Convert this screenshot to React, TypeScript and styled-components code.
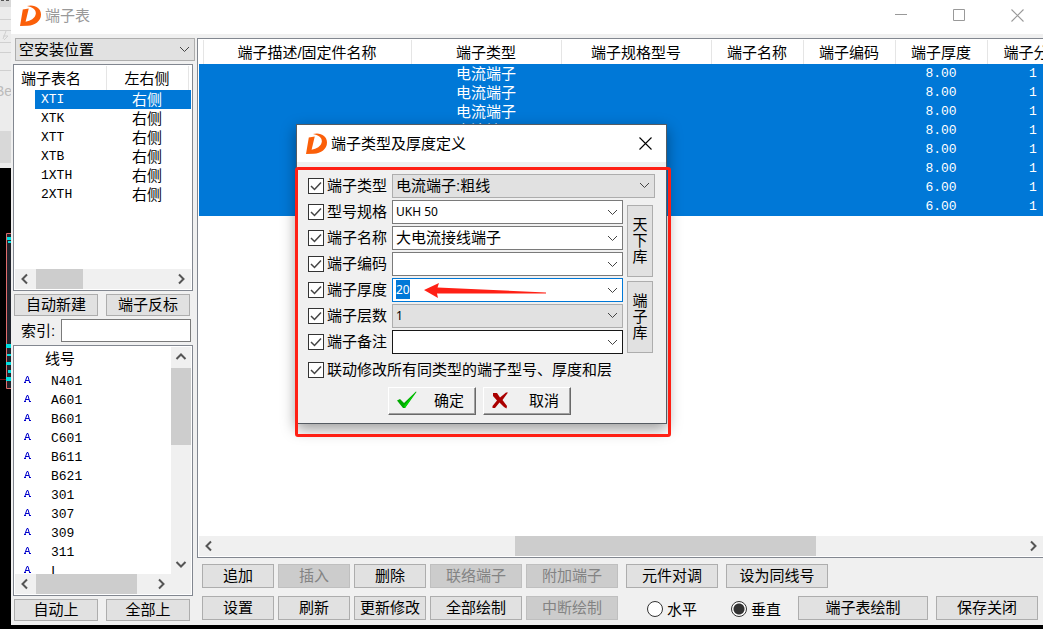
import React, { useEffect, useRef } from 'react';
import styled, { createGlobalStyle, css } from 'styled-components';

const song = '"Liberation Sans", "Noto Sans CJK SC", sans-serif';
const mono = '"Liberation Mono", "Noto Sans CJK SC", monospace';
const hei = '"Noto Sans", "Noto Sans CJK SC", sans-serif';

const GlobalStyle = createGlobalStyle`
  * { box-sizing: border-box; }
  html, body { margin: 0; overflow: hidden; }
  body { font: 400 15px/19px ${song}; color: #000; background: #000; }
  button, input, select { font: inherit; color: inherit; margin: 0; border-radius: 0; }
`;

const Desktop = styled.div`
  display: flex;
  height: 100vh;
  min-height: 600px;
  background: #000;
`;

const Backdrop = styled.svg`
  flex: none;
  width: 11px;
  height: 100%;
`;

const AppWindow = styled.main`
  position: relative;
  flex: 1;
  min-width: 0;
  margin-bottom: 4px;
  display: flex;
  flex-direction: column;
  background: #f0f0f0;
`;

const TitleBar = styled.header<{ $inactive?: boolean }>`
  display: flex;
  align-items: center;
  flex: none;
  background: #fff;
  ${(p) =>
    p.$inactive
      ? css`
          height: 34px;
          padding: 0 19px 4px 9px;
          color: #999;
        `
      : css`
          height: 37px;
          padding: 0 14px 0 9px;
          color: #000;
        `}
`;

const Title = styled.h1`
  flex: 1;
  margin: 0 0 0 4px;
  font-size: 15px;
  font-weight: 400;
`;

const CaptionButtons = styled.div`
  display: flex;
  gap: 45px;
`;

const CaptionButton = styled.button`
  display: flex;
  width: 13px;
  height: 13px;
  padding: 0;
  border: 0;
  background: none;
`;

const WindowBody = styled.div`
  flex: 1;
  min-height: 0;
  display: flex;
  padding: 4px 0 4px 2px;
`;

const Sidebar = styled.div`
  flex: none;
  width: 184px;
  display: flex;
  flex-direction: column;
  gap: 3px;
`;

const Content = styled.div`
  flex: 1;
  min-width: 0;
  display: flex;
  flex-direction: column;
  gap: 8px;
  overflow: hidden;
`;

const Frame = styled.section<{ $height?: number }>`
  display: flex;
  flex-direction: column;
  width: 180px;
  min-height: 0;
  padding: 1px;
  border: 1px solid #828790;
  background: #fff;
  ${(p) => (p.$height ? `flex: none; height: ${p.$height}px;` : 'flex: 1;')}
`;

const GridFrame = styled(Frame)`
  width: auto;
  padding-right: 0;
  border-right: 0;
`;

const Scroller = styled.div`
  flex: 1;
  min-width: 0;
  min-height: 0;
  overflow: hidden;
`;

const ListBody = styled.div`
  display: flex;
  flex: 1;
  min-height: 0;
`;

const Track = styled.div<{ $vertical?: boolean }>`
  flex: none;
  display: flex;
  flex-direction: ${(p) => (p.$vertical ? 'column' : 'row')};
  ${(p) => (p.$vertical ? 'width: 20px;' : 'height: 20px;')}
  background: #f0f0f0;
`;

const TrackButton = styled.button`
  flex: none;
  display: flex;
  align-items: center;
  justify-content: center;
  width: 20px;
  height: 20px;
  padding: 0;
  border: 0;
  background: none;
`;

const TrackSpace = styled.div<{ $grow: number }>`
  flex: ${(p) => p.$grow} 1 0;
`;

const Thumb = styled(TrackSpace)`
  background: #cdcdcd;
`;

const Table = styled.table`
  width: 100%;
  border-collapse: collapse;
  table-layout: fixed;
  th, td {
    padding: 0;
    font-weight: 400;
    white-space: nowrap;
    text-align: center;
  }
  td { height: 19px; line-height: 19px; }
`;

const TerminalTable = styled(Table)`
  width: 880px;
`;

const HeadCell = styled.th<{ $left?: number }>`
  height: 24px;
  border-right: 1px solid #e5e5e5;
  && {
    ${(p) => p.$left !== undefined && `text-align: left; padding-left: ${p.$left}px;`}
  }
`;

const Row = styled.tr<{ $selected?: boolean }>`
  ${(p) => p.$selected && 'background: #0078d7; color: #fff;'}
`;

const SideRow = styled.tr<{ $selected?: boolean }>`
  ${(p) => p.$selected && 'td + td { background: #0078d7; color: #fff; }'}
`;

const Code = styled.td<{ $left?: number }>`
  font-family: ${mono};
  font-size: 13px;
  && {
    ${(p) => p.$left !== undefined && `text-align: left; padding-left: ${p.$left}px;`}
  }
`;

const WireHead = styled.div`
  height: 25px;
  padding: 2px 0 0 30px;
`;

const WireList = styled.ul`
  margin: 0;
  padding: 0;
  list-style: none;
`;

const Wire = styled.li`
  display: flex;
  align-items: center;
  gap: 20px;
  height: 19px;
  padding-left: 9px;
  font-family: ${mono};
  font-size: 13px;
  > svg { margin-bottom: 4px; }
`;

const PushButton = styled.button<{ $width: number; $short?: boolean }>`
  flex: none;
  width: ${(p) => p.$width}px;
  height: ${(p) => (p.$short ? 22 : 24)}px;
  padding: 0;
  border: 1px solid #adadad;
  background: #e1e1e1;
  line-height: 20px;
  white-space: nowrap;
  &:disabled {
    border-color: #bfbfbf;
    background: #ccc;
    color: #838383;
  }
`;

const ButtonPair = styled.div`
  display: flex;
  justify-content: space-between;
  padding: 0 7px 0 1px;
`;

const IndexRow = styled.div`
  display: flex;
  align-items: center;
  justify-content: space-between;
  height: 23px;
  padding: 0 6px 0 8px;
`;

const IndexInput = styled.input`
  width: 130px;
  height: 23px;
  border: 1px solid #7a7a7a;
  background: #fff;
`;

const Toolbar = styled.div`
  display: flex;
  flex: none;
  gap: 4px;
  padding: 0 5px;
  &:last-child { margin-bottom: 1px; }
  &:nth-child(2) { margin-top: -2px; }
`;

const ToolGroup = styled.div`
  display: flex;
  gap: 8px;
  padding-left: 4px;
`;

const RadioGroup = styled.div`
  display: flex;
  gap: 34px;
  width: 164px;
  padding: 2px 0 0 21px;
`;

const RadioLabel = styled.label`
  display: flex;
  align-items: center;
  gap: 4px;
  white-space: nowrap;
`;

const Radio = styled.input`
  appearance: none;
  width: 16px;
  height: 16px;
  border: 1px solid #333;
  background: #fff;
  && { border-radius: 50%; }
  &:checked { background: radial-gradient(circle, #333 5px, #fff 6px); }
`;

const SelectBox = styled.div<{ $wide?: boolean }>`
  position: relative;
  height: 23px;
  margin: 0 2px;
  > svg { position: absolute; right: 5px; top: 8px; pointer-events: none; }
`;

const Select = styled.select`
  appearance: none;
  display: block;
  width: 100%;
  height: 100%;
  padding: 0 3px;
  border: 1px solid #adadad;
  background: #e1e1e1;
`;

/* Dialog floating over the terminal window */
const Dialog = styled.div`
  position: absolute;
  left: 285px;
  top: 124px;
  width: 371px;
  height: 300px;
  border: 1px solid #555b62;
  background: #f0f0f0;
  box-shadow: 0 5px 14px rgba(0, 0, 0, 0.4);
`;

const Form = styled.form`
  display: flex;
  flex-direction: column;
  gap: 2px;
  padding: 12px 11px 0;
`;

const FormColumns = styled.div`
  display: flex;
  gap: 4px;
`;

const FieldList = styled.div`
  display: flex;
  flex-direction: column;
  gap: 2px;
`;

const FieldRow = styled.div`
  display: flex;
  align-items: center;
  height: 24px;
`;

const CheckLabel = styled.label`
  display: flex;
  align-items: center;
  gap: 3px;
  width: 84px;
  line-height: 18px;
  white-space: nowrap;
`;

const CheckWrap = styled.span`
  position: relative;
  display: flex;
  > svg { position: absolute; left: 0; top: 0; pointer-events: none; }
`;

const CheckBox = styled.input`
  appearance: none;
  width: 16px;
  height: 16px;
  border: 1px solid #333;
  background: #fff;
`;

const DialogSelectBox = styled(SelectBox)`
  width: ${(p) => (p.$wide ? 263 : 231)}px;
  height: 24px;
  margin: 0;
`;

const ComboBox = styled.div<{ $edge: string }>`
  display: flex;
  width: 231px;
  height: 24px;
  border: 1px solid ${(p) => p.$edge};
  background: #fff;
`;

const smallText = css`
  font-family: ${hei};
  font-size: 12px;
`;

const ComboInput = styled.input<{ $small?: boolean }>`
  flex: 1;
  min-width: 0;
  padding: 0 3px 2px;
  border: 0;
  outline: 0;
  background: none;
  ${(p) => p.$small && smallText}
  &::selection { background: #0078d7; color: #fff; }
`;

const ComboSelect = styled(Select)<{ $small?: boolean }>`
  padding-bottom: 2px;
  ${(p) => p.$small && smallText}
`;

const ComboButton = styled.button`
  display: flex;
  align-items: center;
  justify-content: center;
  width: 20px;
  padding: 0;
  border: 0;
  background: none;
`;

const LibraryButtons = styled.div`
  display: flex;
  flex-direction: column;
  gap: 4px;
  padding-top: 5px;
`;

const LibraryButton = styled.button`
  display: flex;
  align-items: center;
  justify-content: center;
  width: 26px;
  height: 72px;
  padding: 0;
  border: 1px solid #adadad;
  background: #e1e1e1;
  span { width: 15px; line-height: 16px; word-break: break-all; }
`;

const LinkRow = styled(FieldRow)`
  margin-top: 2px;
`;

const Actions = styled.div`
  display: flex;
  gap: 7px;
  padding: 3px 0 0 80px;
`;

const ActionButton = styled.button`
  display: flex;
  align-items: center;
  justify-content: space-between;
  width: 88px;
  height: 28px;
  padding: 0 11px 2px 7px;
  border: 1px solid;
  border-color: #fff #696969 #696969 #fff;
  background: #f0f0f0;
  box-shadow: inset -1px -1px #a0a0a0;
`;

/* Red marks drawn over the dialog */
const Highlight = styled.div`
  position: absolute;
  left: -2px;
  top: 42px;
  width: 376px;
  height: 270px;
  border: 3px solid #ff2015;
  border-radius: 3px;
  pointer-events: none;
`;

const Arrow = styled.svg`
  position: absolute;
  left: 127px;
  top: 158px;
  pointer-events: none;
`;

const Logo = () => (
  <svg width="21" height="21" viewBox="0 0 60 60" aria-hidden="true">
    <path
      fill="#fb5f09"
      d="M0 60 8 13 25 10 16 48C30 46 43 38 45 26 47 14 36 6 20 3 40-3 60 8 60 27 60 46 43 58 22 59Z"
    />
  </svg>
);

const Chevron = () => (
  <svg width="11" height="7" viewBox="0 0 11 7" fill="none" stroke="#444" aria-hidden="true">
    <path d="M1 1 5.500 5.500 10 1" />
  </svg>
);

const turns = { down: 0, left: 90, up: 180, right: 270 };
const Caret = ({ to }: { to: keyof typeof turns }) => (
  <svg width="12" height="12" viewBox="0 0 12 12" fill="none" stroke="#555" strokeWidth="2" aria-hidden="true">
    <path transform={`rotate(${turns[to]} 6 6)`} d="M1.500 4 6 8.500 10.500 4" />
  </svg>
);

const WireMark = () => (
  <svg width="7" height="7" viewBox="0 0 7 7" fill="none" stroke="#00c" aria-hidden="true">
    <path d="M1 6 3 .5H4L5.500 6M2 4.500H5M0 6.500H2M5 6.500H7" />
  </svg>
);

const Close = ({ color }: { color: string }) => (
  <svg width="13" height="13" viewBox="0 0 13 13" stroke={color} strokeWidth="1.100">
    <path d="M.5.5 12.500 12.500M12.500.5.5 12.500" />
  </svg>
);

function HBar({ before, thumb, after, corner }: { before: number; thumb: number; after: number; corner?: boolean }) {
  return (
    <Track>
      <TrackButton aria-label="向左"><Caret to="left" /></TrackButton>
      <TrackSpace $grow={before} />
      <Thumb $grow={thumb} />
      <TrackSpace $grow={after} />
      <TrackButton aria-label="向右"><Caret to="right" /></TrackButton>
      {corner && <Track $vertical />}
    </Track>
  );
}

function Check({ id }: { id: string }) {
  return (
    <CheckWrap>
      <CheckBox type="checkbox" id={id} defaultChecked />
      <svg width="16" height="16" viewBox="0 0 16 16" fill="none" stroke="#444" strokeWidth="1.500">
        <path d="M3 8 6.500 11.500 13 4.500" />
      </svg>
    </CheckWrap>
  );
}

type Field = {
  id: string;
  label: string;
  value: string;
  kind: 'select' | 'edit';
  edge?: string;
  small?: boolean;
};

const fields: Field[] = [
  { id: 'spec', label: '型号规格', value: 'UKH 50', kind: 'edit', small: true },
  { id: 'name', label: '端子名称', value: '大电流接线端子', kind: 'edit' },
  { id: 'code', label: '端子编码', value: '', kind: 'edit' },
  { id: 'thick', label: '端子厚度', value: '20', kind: 'edit', edge: '#0078d7', small: true },
  { id: 'layer', label: '端子层数', value: '1', kind: 'select', small: true },
  { id: 'note', label: '端子备注', value: '', kind: 'edit', edge: '#171717' },
];

const strips = ['XTI', 'XTK', 'XTT', 'XTB', '1XTH', '2XTH'];
const wires = ['N401', 'A601', 'B601', 'C601', 'B611', 'B621', '301', '307', '309', '311', 'L'];
const columns = [
  ['', 4],
  ['端子描述/固定件名称', 208],
  ['端子类型', 150],
  ['端子规格型号', 150],
  ['端子名称', 92],
  ['端子编码', 92],
  ['端子厚度', 92],
  ['端子分', 92],
] as const;
const rows = [
  ['电流端子', '8.00'],
  ['电流端子', '8.00'],
  ['电流端子', '8.00'],
  ['电流端子', '8.00'],
  ['', '8.00'],
  ['', '8.00'],
  ['', '6.00'],
  ['', '6.00'],
];

function TerminalDialog() {
  const thickness = useRef<HTMLInputElement>(null);
  useEffect(() => {
    thickness.current?.focus();
    thickness.current?.select();
  }, []);
  return (
    <Dialog role="dialog" aria-labelledby="dialog-title">
      <TitleBar>
        <Logo />
        <Title as="h2" id="dialog-title">端子类型及厚度定义</Title>
        <CaptionButton aria-label="关闭"><Close color="#000" /></CaptionButton>
      </TitleBar>
      <Form onSubmit={(e) => e.preventDefault()}>
        <FieldRow>
          <CheckLabel><Check id="use-type" />端子类型</CheckLabel>
          <DialogSelectBox $wide>
            <ComboSelect aria-label="端子类型">
              <option>电流端子:粗线</option>
            </ComboSelect>
            <Chevron />
          </DialogSelectBox>
        </FieldRow>
        <FormColumns>
          <FieldList>
            {fields.map((f) => (
              <FieldRow key={f.id}>
                <CheckLabel><Check id={`use-${f.id}`} />{f.label}</CheckLabel>
                {f.kind === 'select' ? (
                  <DialogSelectBox>
                    <ComboSelect $small={f.small} aria-label={f.label}>
                      <option>{f.value}</option>
                    </ComboSelect>
                    <Chevron />
                  </DialogSelectBox>
                ) : (
                  <ComboBox $edge={f.edge ?? '#7a7a7a'}>
                    <ComboInput
                      ref={f.id === 'thick' ? thickness : undefined}
                      $small={f.small}
                      aria-label={f.label}
                      defaultValue={f.value}
                    />
                    <ComboButton type="button" tabIndex={-1} aria-label="展开"><Chevron /></ComboButton>
                  </ComboBox>
                )}
              </FieldRow>
            ))}
          </FieldList>
          <LibraryButtons>
            <LibraryButton type="button"><span>天下库</span></LibraryButton>
            <LibraryButton type="button"><span>端子库</span></LibraryButton>
          </LibraryButtons>
        </FormColumns>
        <LinkRow>
          <CheckLabel><Check id="use-link" />联动修改所有同类型的端子型号、厚度和层</CheckLabel>
        </LinkRow>
        <Actions>
          <ActionButton type="submit">
            <svg width="21" height="18" viewBox="0 0 21 18">
              <path fill="#0a0" d="M1 9.500 4 8 8 12 20 .5 20.500 1 9 17H7Z" />
              <path fill="#0d0" d="M8 15 20 .5 9 17Z" />
            </svg>
            确定
          </ActionButton>
          <ActionButton type="button">
            <svg width="19" height="17" viewBox="0 0 19 17">
              <path fill="#a00" d="M2 1H6L9 5.500 15 .5H17L11.500 8 16 14 15.500 16.500 13 15 8.500 10.500 4 16H1.500V14L6 8.500 2 4Z" />
            </svg>
            取消
          </ActionButton>
        </Actions>
      </Form>
      <Highlight />
      <Arrow width="122" height="15" viewBox="0 0 122 15">
        <path fill="#ff2015" d="M0 7 15 0 13.500 4.500 122 9.500V10.500L13 10.500 14 15Z" />
      </Arrow>
    </Dialog>
  );
}

export default function App() {
  return (
    <Desktop>
      <GlobalStyle />
      <Backdrop aria-hidden="true">
        <path fill="#ececec" d="M0 0H11V168H0Z" />
        <path fill="#d8d8d8" d="M0 0H11V7H0ZM0 131H11V163H0Z" />
        <path fill="#555" d="M1 0H4V1H1ZM6 0H9V1H6Z" />
        <path fill="none" stroke="#d0d0d0" d="M0 19.500H11M0 30.500H11M0 42.500H11M0 52.500H11M3 39 6 31M3 36H8L4 40M0 70.500H11" />
        <text x="-5" y="96" fontSize="14" fill="#bbb">Be</text>
        <path fill="#20232c" d="M7 234H11V388H7Z" />
        <path fill="none" stroke="#e06c6c" d="M11 233.500H6.500V388.500H11" />
        <path stroke="#701515" d="M0 379.500H6" />
        <path fill="#00e0e0" d="M7 237H11V240H7ZM8 241H11V243H8ZM6 344H11V348H6ZM7 354H11V356H7ZM6 362H11V365H6ZM8 370H11V373H8ZM6 377H11V381H6Z" />
      </Backdrop>
      <AppWindow>
        <TitleBar $inactive>
          <Logo />
          <Title>端子表</Title>
          <CaptionButtons>
            <CaptionButton aria-label="最小化">
              <svg width="13" height="13" stroke="#999"><path d="M0 5.500H12" /></svg>
            </CaptionButton>
            <CaptionButton aria-label="最大化">
              <svg width="13" height="13" stroke="#999" fill="none"><path d="M.5.5H11.500V11.500H.5Z" /></svg>
            </CaptionButton>
            <CaptionButton aria-label="关闭"><Close color="#999" /></CaptionButton>
          </CaptionButtons>
        </TitleBar>
        <WindowBody>
          <Sidebar>
            <SelectBox>
              <Select aria-label="安装位置"><option>空安装位置</option></Select>
              <Chevron />
            </SelectBox>
            <Frame $height={227}>
              <Scroller>
                <Table>
                  <colgroup>
                    <col style={{ width: 20 }} />
                    <col style={{ width: 71 }} />
                    <col style={{ width: 82 }} />
                    <col />
                  </colgroup>
                  <thead>
                    <tr>
                      <HeadCell colSpan={2} $left={6}>端子表名</HeadCell>
                      <HeadCell>左右侧</HeadCell>
                      <th />
                    </tr>
                  </thead>
                  <tbody>
                    {strips.map((s, i) => (
                      <SideRow key={s} $selected={i === 0}>
                        <td />
                        <Code $left={6}>{s}</Code>
                        <td>右侧</td>
                        <td />
                      </SideRow>
                    ))}
                  </tbody>
                </Table>
              </Scroller>
              <HBar before={1} thumb={47} after={88} />
            </Frame>
            <ButtonPair>
              <PushButton $width={84} $short>自动新建</PushButton>
              <PushButton $width={84} $short>端子反标</PushButton>
            </ButtonPair>
            <IndexRow>
              <label htmlFor="index">索引:</label>
              <IndexInput id="index" />
            </IndexRow>
            <Frame>
              <ListBody>
                <Scroller>
                  <WireHead>线号</WireHead>
                  <WireList>
                    {wires.map((w) => (
                      <Wire key={w}><WireMark />{w}</Wire>
                    ))}
                  </WireList>
                </Scroller>
                <Track $vertical>
                  <TrackButton aria-label="向上"><Caret to="up" /></TrackButton>
                  <TrackSpace $grow={1} />
                  <Thumb $grow={77} />
                  <TrackSpace $grow={108} />
                  <TrackButton aria-label="向下"><Caret to="down" /></TrackButton>
                </Track>
              </ListBody>
              <HBar before={1} thumb={101} after={14} corner />
            </Frame>
            <ButtonPair>
              <PushButton $width={84} $short>自动上</PushButton>
              <PushButton $width={84} $short>全部上</PushButton>
            </ButtonPair>
          </Sidebar>
          <Content>
            <GridFrame>
              <Scroller>
                <TerminalTable>
                  <colgroup>
                    {columns.map(([name, width]) => <col key={name} style={{ width }} />)}
                  </colgroup>
                  <thead>
                    <tr>
                      {columns.map(([name]) => (
                        <HeadCell key={name} $left={name === '端子分' ? 16 : undefined}>{name}</HeadCell>
                      ))}
                    </tr>
                  </thead>
                  <tbody>
                    {rows.map(([type, thick], i) => (
                      <Row key={i} $selected>
                        <td /><td />
                        <td>{type}</td>
                        <td /><td /><td />
                        <Code>{thick}</Code>
                        <Code>1</Code>
                      </Row>
                    ))}
                  </tbody>
                </TerminalTable>
              </Scroller>
              <HBar before={296} thumb={301} after={207} />
            </GridFrame>
            <Toolbar>
              <PushButton $width={72}>追加</PushButton>
              <PushButton $width={72} disabled>插入</PushButton>
              <PushButton $width={72}>删除</PushButton>
              <PushButton $width={92} disabled>联络端子</PushButton>
              <PushButton $width={92} disabled>附加端子</PushButton>
              <ToolGroup>
                <PushButton $width={92}>元件对调</PushButton>
                <PushButton $width={102}>设为同线号</PushButton>
              </ToolGroup>
            </Toolbar>
            <Toolbar>
              <PushButton $width={72}>设置</PushButton>
              <PushButton $width={72}>刷新</PushButton>
              <PushButton $width={72}>更新修改</PushButton>
              <PushButton $width={92}>全部绘制</PushButton>
              <PushButton $width={92} disabled>中断绘制</PushButton>
              <ToolGroup>
                <RadioGroup>
                  <RadioLabel><Radio type="radio" name="direction" />水平</RadioLabel>
                  <RadioLabel><Radio type="radio" name="direction" defaultChecked />垂直</RadioLabel>
                </RadioGroup>
                <PushButton $width={130}>端子表绘制</PushButton>
                <PushButton $width={102}>保存关闭</PushButton>
              </ToolGroup>
            </Toolbar>
          </Content>
        </WindowBody>
        <TerminalDialog />
      </AppWindow>
    </Desktop>
  );
}
